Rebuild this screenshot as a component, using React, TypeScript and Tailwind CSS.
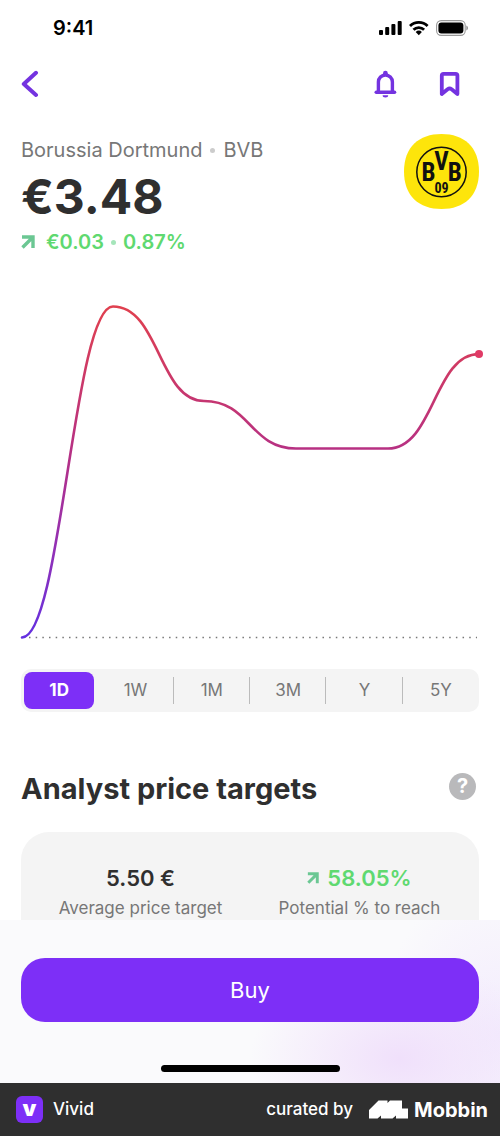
import React, { useState } from 'react';

const RANGES = ['1D', '1W', '1M', '3M', 'Y', '5Y'];

function StatusBar() {
  return (
    <div className="flex h-14 items-center justify-between pl-[53px] pr-8">
      <span className="text-xl font-semibold text-black">9:41</span>
      <svg width="90" height="16" viewBox="0 0 90 16" aria-hidden="true">
        <rect x="1" y="10" width="4" height="5" rx="1" />
        <rect x="7.2" y="7" width="4" height="8" rx="1" />
        <rect x="13.4" y="4" width="4" height="11" rx="1" />
        <rect x="19.7" y="1" width="4" height="14" rx="1" />
        <g fill="none" stroke="#000" strokeWidth="2.8">
          <path d="M32 6.1a12.4 12.4 0 0 1 17.6 0" />
          <path d="M35.5 9.8a7.5 7.5 0 0 1 10.6 0" />
        </g>
        <path d="M37.7 12a4.5 4.5 0 0 1 6.2 0l-3.1 3.3z" />
        <rect x="58.6" y="0.6" width="28.6" height="14.8" rx="4.6" fill="none" stroke="#999" strokeWidth="1.1" />
        <rect x="60.4" y="2.4" width="25" height="11.2" rx="3" />
        <path d="M88.4 5.5c2 .8 2 4.2 0 5z" fill="#888" />
      </svg>
    </div>
  );
}

function NavBar() {
  return (
    <div className="flex h-14 items-center justify-between pl-[21px] pr-[39px] text-[#7433e0]">
      <button aria-label="Back">
        <svg width="18" height="28" viewBox="0 0 18 28" fill="none" stroke="currentColor" strokeWidth="4" strokeLinecap="round" strokeLinejoin="round">
          <path d="M15 2.8L2.8 14 15 25" />
        </svg>
      </button>
      <div className="flex gap-[42px]">
        <button aria-label="Price alerts">
          <svg width="24" height="28" viewBox="0 0 24 28" fill="none" stroke="currentColor" strokeWidth="3.4">
            <path d="M5.4 22.2V12a7 7 0 0 1 14 0v10.2" />
            <path d="M3.2 22.2h18.4" strokeLinecap="round" />
            <path d="M10 5V3.2a2.4 2.4 0 0 1 4.8 0V5z" fill="currentColor" stroke="none" />
            <path d="M9.6 25.2h5.6a2.8 2.2 0 0 1-5.6 0z" fill="currentColor" stroke="none" />
          </svg>
        </button>
        <button aria-label="Add to watchlist">
          <svg width="22" height="28" viewBox="0 0 22 28" fill="none" stroke="currentColor" strokeWidth="3.8" strokeLinejoin="round">
            <path d="M2.8 24V5.6q0-1.8 1.8-1.8h12q1.800 0 1.800 1.800V24l-5.800-4.800q-2-1.500-4 0z" />
          </svg>
        </button>
      </div>
    </div>
  );
}

function TrendArrow({ size }: { size: number }) {
  return (
    <svg width={size} height={size} viewBox="0 0 14 14" fill="none" stroke="#6bc793" strokeWidth="3.4" aria-hidden="true">
      <path d="M1 2h11v11M11.5 2.5L1.5 12.5" />
    </svg>
  );
}

function ClubLogo() {
  return (
    <svg width="75" height="75" viewBox="0 0 75 75" role="img" aria-label="BVB 09" className="shrink-0">
      <path d="M37.5 0C60 0 75 13 75 37.5S60 75 37.5 75 0 62 0 37.5 15 0 37.5 0z" fill="#fde50b" />
      <circle cx="37.5" cy="38" r="24.7" fill="none" stroke="#111" strokeWidth="1.5" />
      <g fill="#111" textAnchor="middle" className="font-['Liberation_Sans_Narrow','Roboto_Condensed','Liberation_Sans',sans-serif] font-bold">
        <text x="24.5" y="46.5" fontSize="25">B</text>
        <text x="37.5" y="36" fontSize="25">V</text>
        <text x="50.7" y="46.5" fontSize="25">B</text>
        <text x="37.5" y="58.5" fontSize="14">09</text>
      </g>
    </svg>
  );
}

function PriceChart() {
  return (
    <svg viewBox="0 0 458 345" className="mt-[41px] block h-auto w-full overflow-visible" role="img" aria-label="Price over one day">
      <defs>
        <linearGradient id="line" gradientUnits="userSpaceOnUse" x1="0" y1="11" x2="0" y2="341">
          <stop offset="0" stopColor="#e0404f" />
          <stop offset="0.45" stopColor="#b53085" />
          <stop offset="0.75" stopColor="#9030b8" />
          <stop offset="1" stopColor="#6430e0" />
        </linearGradient>
      </defs>
      <path d="M8 341.5H456" stroke="#777" strokeWidth="1.5" strokeDasharray="1.5 5.17" />
      <path
        d="M1 341.5C40 341.5 53 10.5 92 10.5C138 10.5 138 105 183 105C229 105 229 152.5 275 152.5H367C413 152.5 413 58 458 58"
        fill="none"
        stroke="url(#line)"
        strokeWidth="2.6"
        strokeLinecap="round"
      />
      <circle cx="458" cy="58" r="4" fill="#e03a66" />
    </svg>
  );
}

function RangeTabs() {
  const [range, setRange] = useState('1D');

  return (
    <div className="mt-[28px] grid grid-cols-6 rounded-[10px] bg-[#f4f4f4] py-[3px]">
      {RANGES.map((item, i) => (
        <div key={item} className="relative flex h-[37px] px-[3px]">
          <button
            onClick={() => setRange(item)}
            className={
              item === range
                ? 'w-full rounded-lg bg-[#7d2ff7] text-[17px] font-bold text-white'
                : 'w-full rounded-lg text-[17px] text-[#777]'
            }
          >
            {item}
          </button>
          {i > 0 && i < RANGES.length - 1 && (
            <span className="absolute right-0 top-[5px] h-[27px] w-px bg-[#bbb]" />
          )}
        </div>
      ))}
    </div>
  );
}

function AnalystTargets() {
  return (
    <section className="mt-[56px]">
      <div className="flex items-start justify-between pr-[3px]">
        <h2 className="text-[29px] leading-[42px] font-bold text-[#2f2f2f]">Analyst price targets</h2>
        <button
          aria-label="About price targets"
          className="mt-[5px] size-[27px] rounded-full bg-[#b9b9bb] text-xl leading-[27px] font-bold text-white"
        >
          ?
        </button>
      </div>
      <div className="mt-[22px] grid h-[88px] grid-cols-2 rounded-t-[28px] bg-[#f4f4f4] px-2.5 pt-8 text-center">
        <div>
          <p className="text-[22px] leading-7 font-semibold text-[#2f2f2f]">5.50 €</p>
          <p className="text-[17px] leading-8 text-[#777]">Average price target</p>
        </div>
        <div>
          <p className="flex items-center justify-center gap-2 text-[22px] leading-7 font-semibold text-[#5fd970]">
            <TrendArrow size={12} />
            58.05%
          </p>
          <p className="text-[17px] leading-8 text-[#777]">Potential % to reach</p>
        </div>
      </div>
    </section>
  );
}

function BuyPanel() {
  return (
    <div className="flex flex-col items-center bg-[#fafafc] bg-[radial-gradient(ellipse_150px_100px_at_80%_85%,#f0e0fb,transparent),radial-gradient(ellipse_120px_160px_at_100%_70%,#f3ecfd,transparent)] px-[21px] pt-[38px] pb-[11px]">
      <button className="h-16 w-full rounded-3xl bg-[#7d2ff7] text-[22px] text-white">Buy</button>
      <div className="mt-[43px] h-[7px] w-[179px] rounded-full bg-black" />
    </div>
  );
}

function Footer() {
  return (
    <footer className="flex h-[53px] items-center justify-between bg-[#2f2f2f] pl-4 pr-3 text-white">
      <div className="flex items-center gap-2.5">
        <span className="flex size-[27px] items-center justify-center rounded-md bg-[#7d2ff7] text-[22px] leading-none font-black">
          <span className="pb-1">v</span>
        </span>
        <span className="text-[17px] font-medium">Vivid</span>
      </div>
      <div className="flex items-center">
        <span className="text-[17px] font-medium">curated by</span>
        <svg width="39" height="19" viewBox="0 0 39 19" fill="#fff" className="ml-4 mr-1.5" aria-hidden="true">
          <path d="M0 10L9.5 .5h9v2.5L21 .5h12v8h6v10H27v-3l-3.5 3H12v-3l-3.5 3H0z" />
        </svg>
        <span className="text-xl font-bold">Mobbin</span>
      </div>
    </footer>
  );
}

function App() {
  return (
    <div className="flex min-h-screen flex-col bg-white font-['Inter',sans-serif]">
      <StatusBar />
      <NavBar />
      <main className="grow px-[21px]">
        <div className="mt-[22px] flex items-start justify-between">
          <div className="pt-px">
            <h1 className="flex items-center gap-2 text-xl leading-[30px] text-[#777]">
              Borussia Dortmund
              <span className="size-[5px] rounded-full bg-[#ccc]" />
              BVB
            </h1>
            <p className="text-[48px] leading-[64px] font-bold text-[#2f2f2f]">€3.48</p>
            <p className="flex items-center text-xl leading-[26px] font-semibold text-[#5fd970]">
              <TrendArrow size={14} />
              <span className="ml-[11px]">€0.03</span>
              <span className="mx-[7px] size-[5px] rounded-full bg-[#a5e5ba]" />
              <span>0.87%</span>
            </p>
          </div>
          <ClubLogo />
        </div>
        <PriceChart />
        <RangeTabs />
        <AnalystTargets />
      </main>
      <BuyPanel />
      <Footer />
    </div>
  );
}

export default App;
